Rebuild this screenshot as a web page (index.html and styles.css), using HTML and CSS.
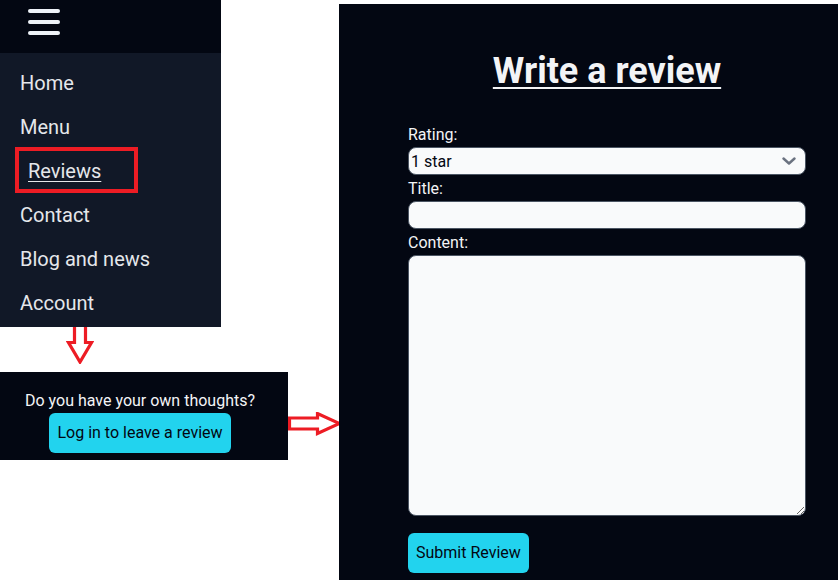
FILE: index.html
```html
<!DOCTYPE html>
<html lang="en">
<head>
<meta charset="utf-8">
<title>Write a review</title>
<link rel="stylesheet" href="styles.css">
</head>
<body>
<div class="page">
  <div class="left">
    <nav class="nav">
      <div class="nav-top">
        <div class="burger"><span></span><span></span><span></span></div>
      </div>
      <ul class="nav-list">
        <li>Home</li>
        <li>Menu</li>
        <li class="current"><a href="#">Reviews</a></li>
        <li>Contact</li>
        <li>Blog and news</li>
        <li>Account</li>
      </ul>
      <div class="mark"></div>
    </nav>
    <div class="down">
      <svg width="28" height="40" viewBox="0 0 28 40"><path d="M8.5 1.5 H19.5 V18.5 H25.5 L14 38 L2.5 18.5 H8.5 Z" fill="#fff" stroke="#ed1c24" stroke-width="3.2" stroke-linejoin="miter"/></svg>
    </div>
    <div class="login">
      <p class="login-text">Do you have your own thoughts?</p>
      <button class="cyan-btn" type="button">Log in to leave a review</button>
    </div>
  </div>
  <div class="right-arrow">
    <svg width="54" height="24" viewBox="0 0 54 24"><path d="M1.5 6 H29.5 V1.5 L51.5 11.5 L29.5 21.5 V17 H1.5 Z" fill="#fff" stroke="#ed1c24" stroke-width="3.2" stroke-linejoin="miter"/></svg>
  </div>
  <main class="panel">
    <div class="form-wrap">
      <h1 class="title">Write a review</h1>
      <form class="form">
        <label class="lbl" for="rating">Rating:</label>
        <div class="select-wrap">
          <select id="rating" class="ctl sel">
            <option>1 star</option>
            <option>2 stars</option>
            <option>3 stars</option>
            <option>4 stars</option>
            <option>5 stars</option>
          </select>
          <svg class="chev" width="14" height="8" viewBox="0 0 14 8"><path d="M1.5 1.5 L7 6.5 L12.5 1.5" fill="none" stroke="#6b7280" stroke-width="2.4" stroke-linecap="round" stroke-linejoin="round"/></svg>
        </div>
        <label class="lbl" for="title">Title:</label>
        <input id="title" class="ctl inp" type="text">
        <label class="lbl" for="content">Content:</label>
        <textarea id="content" class="ctl area"></textarea>
        <button class="cyan-btn submit" type="button">Submit Review</button>
      </form>
    </div>
  </main>
</div>
</body>
</html>
```
FILE: styles.css
```css
* { box-sizing: border-box; }
html, body { margin: 0; padding: 0; }
body {
  background: #ffffff;
  font-family: Roboto, "Liberation Sans", sans-serif;
  overflow: hidden;
  width: 838px;
  height: 580px;
}
.page {
  display: flex;
  align-items: flex-start;
}
.left {
  width: 288px;
  display: flex;
  flex-direction: column;
}
.nav {
  width: 221px;
  position: relative;
}
.nav-top {
  height: 53px;
  background: #030712;
  padding: 9px 0 0 28px;
}
.burger {
  display: flex;
  flex-direction: column;
  gap: 7px;
  width: 32px;
}
.burger span {
  display: block;
  height: 4px;
  border-radius: 2px;
  background: #eef2f8;
}
.nav-list {
  list-style: none;
  margin: 0;
  padding: 8px 0 2px;
  background: #111827;
}
.nav-list li {
  height: 44px;
  line-height: 44px;
  font-size: 20px;
  color: #e5e7eb;
  padding-left: 20px;
}
.nav-list li.current { padding-left: 28px; }
.nav-list a {
  color: #e5e7eb;
  text-decoration: underline;
  text-underline-offset: 3px;
  text-decoration-thickness: 1px;
}
.mark {
  position: absolute;
  left: 15px;
  top: 147px;
  width: 123px;
  height: 46px;
  border: 4px solid #ed1c24;
}
.down {
  height: 45px;
  padding-left: 66px;
}
.down svg {
  display: block;
  margin-top: -3px;
}
.login {
  width: 288px;
  background: #030712;
  padding: 17px 8px 7px 0;
  text-align: center;
}
.login-text {
  margin: 0;
  font-size: 16px;
  line-height: 24px;
  color: #f3f4f6;
}
.cyan-btn {
  font-family: Roboto, "Liberation Sans", sans-serif;
  font-size: 16px;
  line-height: 24px;
  padding: 8px 8px;
  background: #22d3ee;
  color: #030712;
  border: none;
  border-radius: 6px;
  margin: 0;
}
.right-arrow {
  width: 51px;
  margin-top: 412px;
}
.right-arrow svg { display: block; }
.panel {
  width: 499px;
  height: 576px;
  margin-top: 4px;
  background: #030712;
  padding: 47px 0 0 69px;
}
.form-wrap { width: 398px; }
.title {
  margin: 0 0 32px;
  text-align: center;
  font-size: 36px;
  line-height: 40px;
  font-weight: 700;
  color: #f3f4f6;
  text-decoration: underline;
  text-decoration-thickness: 2px;
  text-underline-offset: 4px;
}
.form {
  display: flex;
  flex-direction: column;
  align-items: flex-start;
}
.lbl {
  display: block;
  font-size: 16px;
  line-height: 24px;
  color: #f3f4f6;
}
.ctl {
  width: 398px;
  background: #f9fafb;
  border: 1px solid #4b5563;
  border-radius: 8px;
  font-family: Roboto, "Liberation Sans", sans-serif;
  font-size: 16px;
  color: #030712;
  margin: 0;
  outline: none;
}
.select-wrap {
  position: relative;
  width: 398px;
  margin-bottom: 2px;
}
.sel {
  display: block;
  height: 28px;
  padding: 0 30px 0 2px;
  appearance: none;
  -webkit-appearance: none;
}
.chev {
  position: absolute;
  right: 10px;
  top: 10px;
}
.inp {
  display: block;
  height: 28px;
  padding: 0 4px;
  margin-bottom: 2px;
}
.area {
  display: block;
  height: 261px;
  padding: 4px;
  resize: both;
}
.submit {
  margin-top: 17px;
  padding: 8px 8px;
}
```
